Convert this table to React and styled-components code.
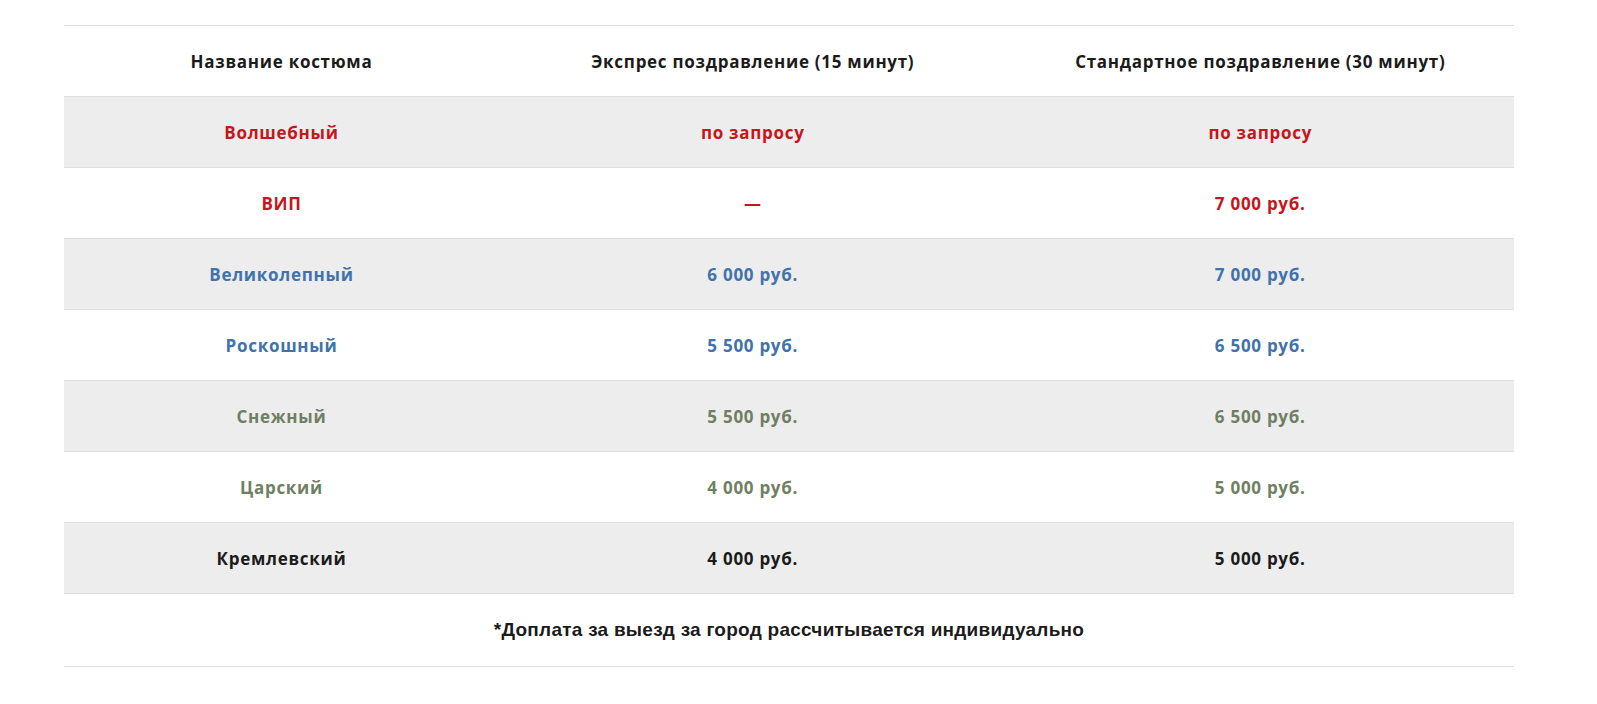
import React from "react";
import styled, { createGlobalStyle } from "styled-components";

const GlobalStyle = createGlobalStyle`
  body {
    margin: 0;
    background: #fff;
    font-family: "Open Sans", "Liberation Sans", sans-serif;
  }
`;

//colours for each tier of costume
const tones = {
  red: "#c4161c",
  blue: "#4172ab",
  green: "#6f7f63",
  dark: "#1b1b1b",
};

const rows = [
  { name: "Волшебный", express: "по запросу", standard: "по запросу", tone: "red" },
  { name: "ВИП", express: "—", standard: "7 000 руб.", tone: "red" },
  { name: "Великолепный", express: "6 000 руб.", standard: "7 000 руб.", tone: "blue" },
  { name: "Роскошный", express: "5 500 руб.", standard: "6 500 руб.", tone: "blue" },
  { name: "Снежный", express: "5 500 руб.", standard: "6 500 руб.", tone: "green" },
  { name: "Царский", express: "4 000 руб.", standard: "5 000 руб.", tone: "green" },
  { name: "Кремлевский", express: "4 000 руб.", standard: "5 000 руб.", tone: "dark" },
];

export default function App() {
  return (
    <>
      <GlobalStyle />
      <Page>
        <PriceTable>
          <colgroup>
            <col style={{ width: "30%" }} />
            <col style={{ width: "35%" }} />
            <col style={{ width: "35%" }} />
          </colgroup>
          <thead>
            <Row>
              <HeadCell>Название костюма</HeadCell>
              <HeadCell>Экспрес поздравление (15 минут)</HeadCell>
              <HeadCell>Стандартное поздравление (30 минут)</HeadCell>
            </Row>
          </thead>
          <tbody>
            {rows.map((row, i) => (
              <Row key={row.name} $striped={i % 2 === 0}>
                <Cell $tone={row.tone}>{row.name}</Cell>
                <Cell $tone={row.tone}>{row.express}</Cell>
                <Cell $tone={row.tone}>{row.standard}</Cell>
              </Row>
            ))}
            <Row>
              <Note colSpan={3}>
                *Доплата за выезд за город рассчитывается индивидуально
              </Note>
            </Row>
          </tbody>
        </PriceTable>
      </Page>
    </>
  );
}

const Page = styled.div`
  padding: 25px 83px 40px 64px;
`;

const PriceTable = styled.table`
  width: 1450px;
  border-collapse: collapse;
  table-layout: fixed;
  border-bottom: 1px solid #dedede;
`;

const Row = styled.tr`
  background: ${(p) => (p.$striped ? "#ededed" : "#fff")};
  border-top: 1px solid #dedede;
`;

const HeadCell = styled.th`
  height: 70px;
  padding: 0 10px;
  text-align: center;
  vertical-align: middle;
  font-size: 17px;
  font-weight: 700;
  letter-spacing: 0.72px;
  color: #1b1b1b;
`;

const Cell = styled.td`
  height: 70px;
  padding: 0 10px;
  text-align: center;
  vertical-align: middle;
  font-size: 17px;
  font-weight: 700;
  letter-spacing: 0.72px;
  color: ${(p) => tones[p.$tone]};
`;

const Note = styled.td`
  height: 70px;
  text-align: center;
  vertical-align: middle;
  font-family: "Liberation Sans", Arial, sans-serif;
  font-size: 19px;
  font-weight: 700;
  letter-spacing: 0.25px;
  color: #1b1b1b;
`;
